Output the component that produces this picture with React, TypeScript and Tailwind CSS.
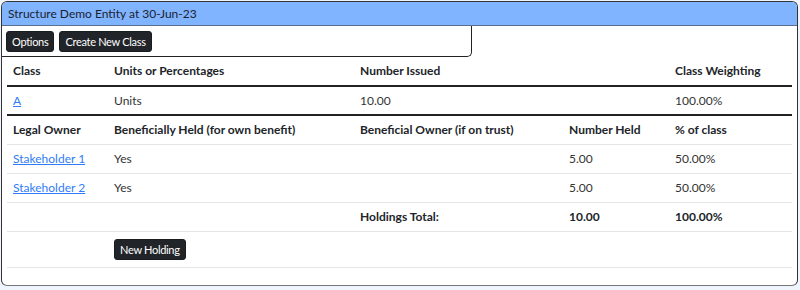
import React from 'react'

const font = { fontFamily: 'Lato, "Noto Sans", Arial, sans-serif' }

function Btn({ children }: { children: React.ReactNode }) {
  return (
    <button className="h-[21px] px-[5px] bg-[#212529] text-white text-[11px] tracking-[-0.3px] leading-none rounded-[3px] border border-[#1a1d20]">
      {children}
    </button>
  )
}

const cols = 'grid grid-cols-[101px_246px_209px_106px_1fr]'

export default function App() {
  return (
    <div className="w-[800px] h-[290px] bg-[#eef5ff] pt-[1px] pl-[1px]" style={font}>
      <div className="w-[797px] h-[285px] bg-white border border-[#333] border-b-[#777] rounded-[6px] overflow-hidden text-[12px] text-[#212529]">
        {/* Header */}
        <div className="h-[24px] bg-[#80b4ff] border-b border-[#5a6f8f] flex items-center px-[6px] text-[12px] text-[#1c2230]">
          Structure Demo Entity at 30-Jun-23
        </div>

        {/* Toolbar */}
        <div className="w-[470px] h-[31px] border-r border-b border-[#222] rounded-br-[5px] flex items-center gap-[5px] px-[4px]">
          <Btn>Options</Btn>
          <Btn>Create New Class</Btn>
        </div>

        <div className="mx-[5px] w-[785px]">
          {/* Class table */}
          <div className={`${cols} h-[30px] items-center font-bold border-b-2 border-[#222] [&>div]:px-[6px]`}>
            <div>Class</div>
            <div>Units or Percentages</div>
            <div className="col-span-2">Number Issued</div>
            <div>Class Weighting</div>
          </div>
          <div className={`${cols} h-[29px] items-center border-b-2 border-[#222] text-[#333] [&>div]:px-[6px]`}>
            <div><a href="#" className="text-[#2f7cf6] underline">A</a></div>
            <div>Units</div>
            <div className="col-span-2">10.00</div>
            <div>100.00%</div>
          </div>

          {/* Holdings table */}
          <div className={`${cols} h-[29px] items-center font-bold border-b border-[#e3e5e8] [&>div]:px-[6px]`}>
            <div>Legal Owner</div>
            <div>Beneficially Held (for own benefit)</div>
            <div>Beneficial Owner (if on trust)</div>
            <div>Number Held</div>
            <div>% of class</div>
          </div>
          {['Stakeholder 1', 'Stakeholder 2'].map((s) => (
            <div key={s} className={`${cols} h-[29px] items-center border-b border-[#e3e5e8] text-[#333] [&>div]:px-[6px]`}>
              <div><a href="#" className="text-[#2f7cf6] underline">{s}</a></div>
              <div>Yes</div>
              <div></div>
              <div>5.00</div>
              <div>50.00%</div>
            </div>
          ))}
          <div className={`${cols} h-[29px] items-center font-bold border-b border-[#e3e5e8] [&>div]:px-[6px]`}>
            <div></div>
            <div></div>
            <div>Holdings Total:</div>
            <div>10.00</div>
            <div>100.00%</div>
          </div>
          <div className={`${cols} h-[36px] items-center border-b border-[#e3e5e8] [&>div]:px-[6px]`}>
            <div></div>
            <div>
              <Btn>New Holding</Btn>
            </div>
          </div>
        </div>
      </div>
    </div>
  )
}
